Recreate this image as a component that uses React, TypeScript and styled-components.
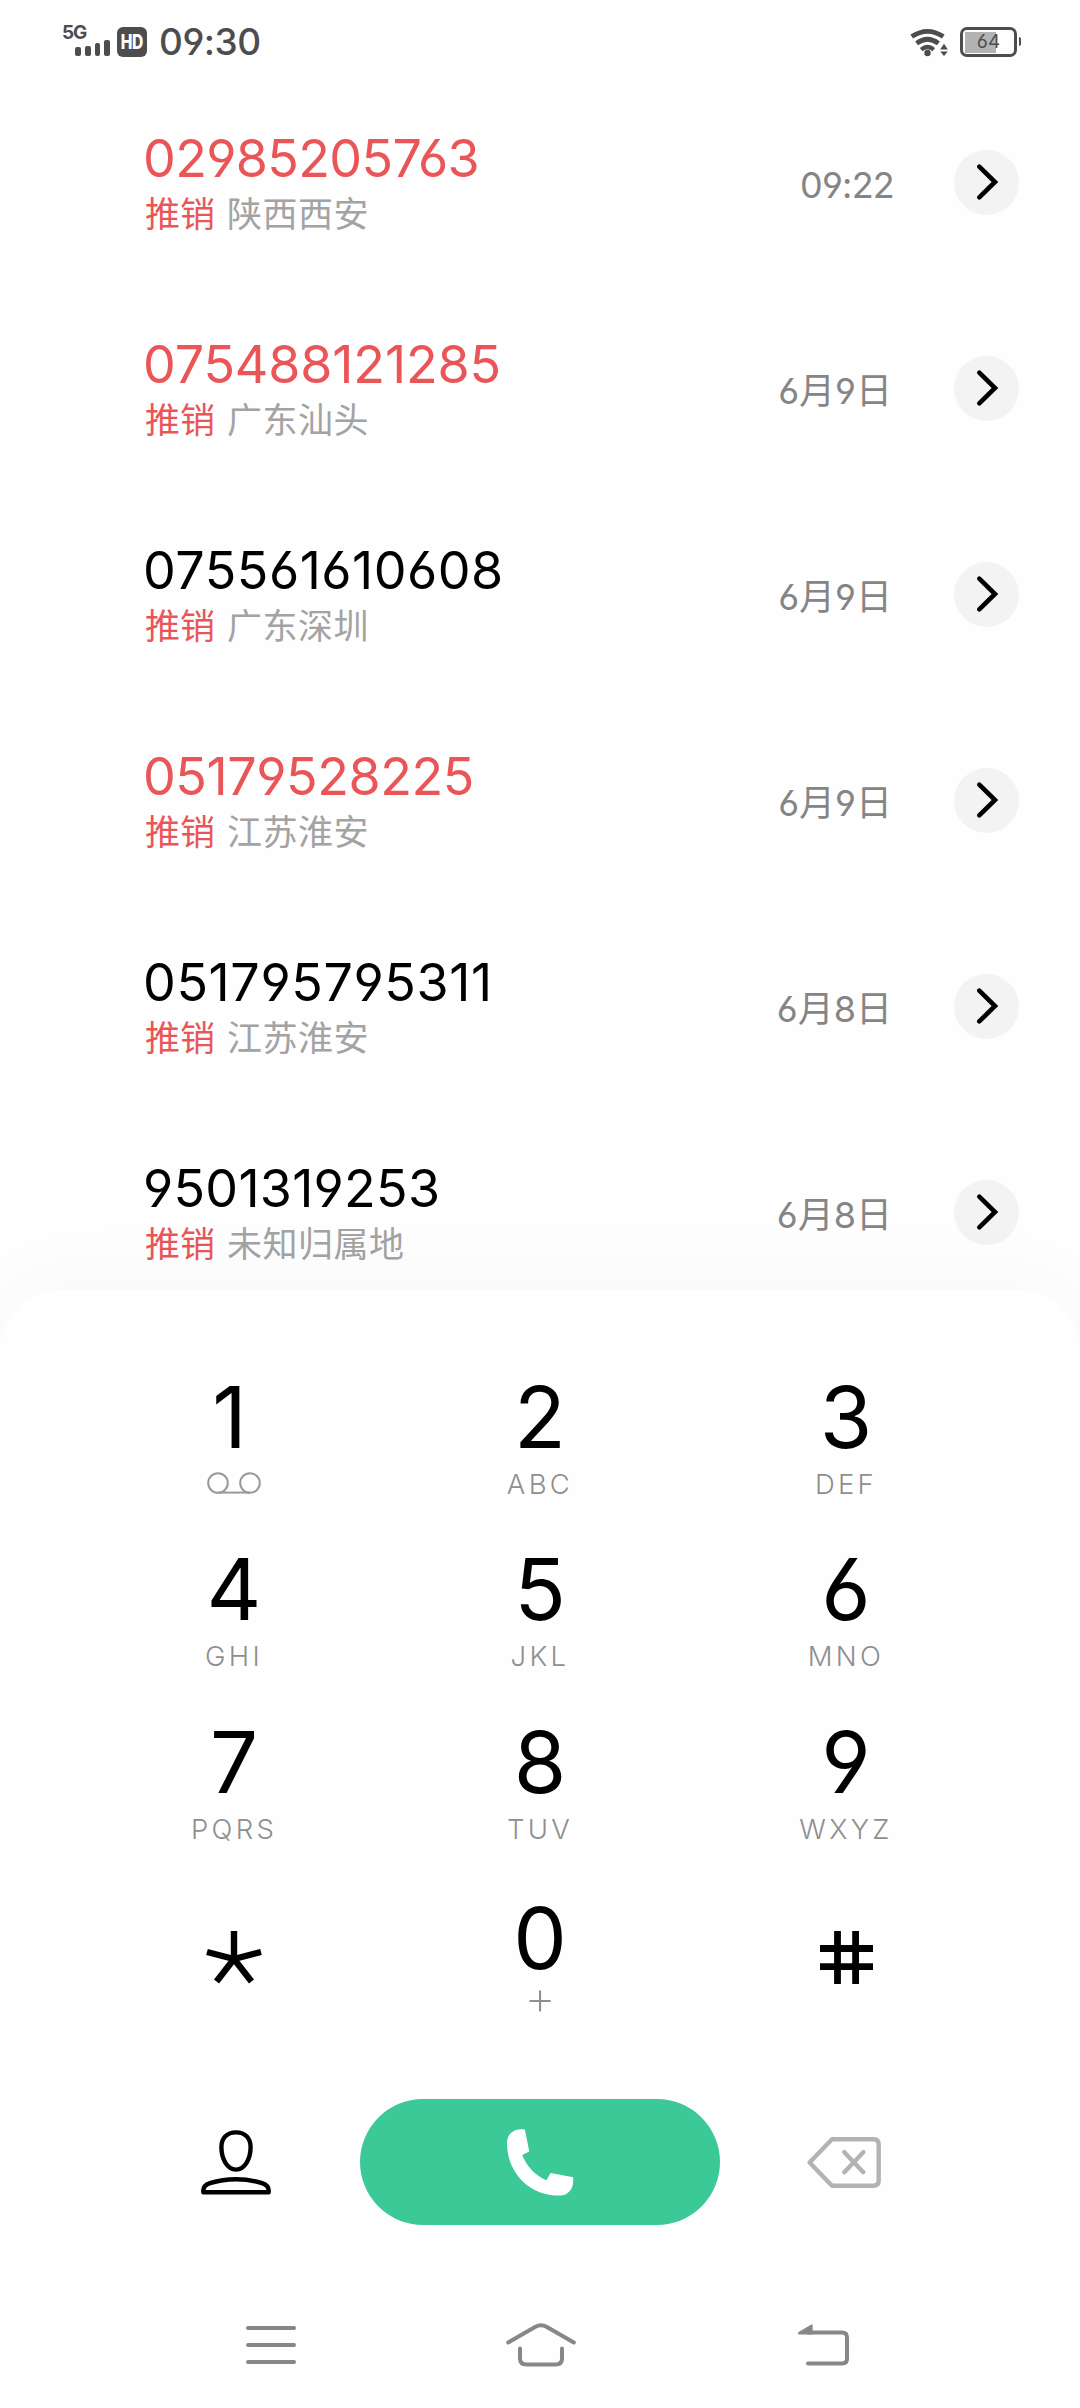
import React from 'react';
import styled, { createGlobalStyle } from 'styled-components';

const GlobalStyle = createGlobalStyle`
  * { box-sizing: border-box; }
  body {
    margin: 0;
    background: #fefefe;
    font-family: Inter, 'Noto Sans CJK SC', sans-serif;
    font-feature-settings: 'cv03', 'cv04';
  }
  button {
    border: 0;
    padding: 0;
    background: none;
    font: inherit;
    font-feature-settings: inherit;
    color: inherit;
  }
  svg { display: block; overflow: visible; }
`;

const Screen = styled.div`
  width: 1080px;
  height: 2408px;
  display: flex;
  flex-direction: column;
  overflow: hidden;
  background: #fefefe;
`;

/* ---------- Status bar ---------- */

const StatusBar = styled.header`
  flex: 0 0 79px;
  display: flex;
  justify-content: space-between;
  align-items: flex-start;
  padding: 24px 59px 0 62px;
  color: #4d4d4d;
`;

const StatusGroup = styled.div`
  display: flex;
  align-items: flex-start;
`;

const Signal = styled.div`
  width: 49px;
  display: flex;
  flex-direction: column;
`;

const NetworkType = styled.span`
  height: 16px;
  font-size: 19px;
  line-height: 17px;
  font-weight: 700;
  letter-spacing: -1.2px;
`;

const Bars = styled.div`
  display: flex;
  align-items: flex-end;
  gap: 4px;
  padding-left: 13px;
`;

const Bar = styled.i<{ $height: number }>`
  width: 5.8px;
  height: ${(p) => p.$height}px;
  border-radius: 2px;
  background: #4d4d4d;
`;

const HdBadge = styled.span`
  width: 30px;
  height: 30px;
  margin: 3px 12px 0 6px;
  display: flex;
  align-items: center;
  justify-content: center;
  border-radius: 6px;
  background: #4d4d4d;
  color: #fff;
`;

const HdText = styled.span`
  font-size: 19.5px;
  line-height: 30px;
  font-weight: 800;
  letter-spacing: -0.6px;
  transform: scaleX(0.8);
`;

const Clock = styled.time`
  font-size: 37px;
  line-height: 36px;
  font-weight: 450;
  letter-spacing: -0.5px;
`;

const WifiWrap = styled.div`
  margin: 5px 11px 0 0;
`;

const Battery = styled.div`
  width: 57px;
  height: 30px;
  margin-top: 3px;
  padding: 1.5px;
  border: 3px solid #4d4d4d;
  border-radius: 7px;
`;

const BatteryLevel = styled.div<{ $level: number }>`
  height: 100%;
  display: flex;
  align-items: center;
  justify-content: center;
  font-size: 19px;
  line-height: 20px;
  background: linear-gradient(90deg, #b3b3b3 ${(p) => p.$level}%, transparent 0);
`;

const BatteryNub = styled.i`
  width: 2.5px;
  height: 9px;
  margin: 13px 0 0 1.5px;
  border-radius: 0 2px 2px 0;
  background: #4d4d4d;
`;

/* ---------- Call log ---------- */

const CallLog = styled.ul`
  flex: 0 0 1211px;
  margin: 0;
  padding: 0;
  list-style: none;
  overflow: hidden;
`;

const CallRow = styled.li`
  height: 206px;
  display: flex;
  align-items: center;
  padding: 0 61px 0 143px;
`;

const Caller = styled.div`
  flex: 1;
  padding-bottom: 1px;
`;

const PhoneNumber = styled.div<{ $missed: boolean; $tracking: number }>`
  font-size: 52px;
  line-height: 52px;
  font-weight: 380;
  letter-spacing: ${(p) => p.$tracking}px;
  color: ${(p) => (p.$missed ? '#ea5558' : '#000')};
`;

const Origin = styled.div`
  display: flex;
  gap: 12px;
  margin: 9px 0 0 2px;
  font-family: 'Noto Sans CJK SC', sans-serif;
  font-size: 35px;
  line-height: 36px;
  color: #a3a3a3;
`;

const Place = styled.span`
  letter-spacing: 0.5px;
`;

const Tag = styled.span`
  color: #ea5558;
`;

const CallTime = styled.time<{ $tight: boolean }>`
  padding-top: 5px;
  margin-right: ${(p) => (p.$tight ? 60 : 62)}px;
  font-size: 36px;
  line-height: 36px;
  letter-spacing: ${(p) => (p.$tight ? '-0.8px' : 0)};
  color: #858585;
`;

const DetailButton = styled.button`
  width: 65px;
  height: 65px;
  padding-left: 2px;
  display: flex;
  align-items: center;
  justify-content: center;
  border-radius: 50%;
  background: #f3f3f3;
`;

/* ---------- Dial sheet ---------- */

const Sheet = styled.section`
  position: relative;
  flex: 1;
  display: flex;
  flex-direction: column;
  border-radius: 60px 60px 0 0;
  background: #fefefe;
  box-shadow: 0 0 95px rgba(0, 0, 0, 0.04);
`;

const Keypad = styled.div`
  display: grid;
  grid-template-columns: repeat(3, 306px);
  grid-template-rows: 172px 173px 176px 204px;
  padding: 84px 81px 0;
`;

const Key = styled.button`
  display: flex;
  flex-direction: column;
  align-items: center;
  justify-content: flex-start;
`;

const Digit = styled.span<{ $inset: number }>`
  padding-right: ${(p) => p.$inset}px;
  font-size: 85px;
  line-height: 87px;
  font-weight: 370;
  color: #000;
`;

const Letters = styled.span`
  margin-top: 10px;
  font-size: 27.5px;
  line-height: 27px;
  font-weight: 330;
  letter-spacing: 3.3px;
  color: #8f8f8f;
`;

const Plus = styled.span`
  margin-top: -3px;
  font-size: 49px;
  line-height: 38px;
  font-weight: 250;
  color: #8f8f8f;
`;

const VoicemailWrap = styled.span`
  margin-top: 11px;
`;

const SymbolWrap = styled.span`
  padding-top: 36px;
`;

const Actions = styled.div`
  height: 126px;
  display: flex;
  align-items: center;
  padding-left: 201px;
`;

const CallButton = styled.button`
  width: 360px;
  height: 126px;
  margin: 0 87px 0 89px;
  display: flex;
  align-items: center;
  justify-content: center;
  border-radius: 63px;
  background: #3bc998;
`;

const NavBar = styled.nav`
  flex: 1;
  display: flex;
  align-items: center;
  padding: 57px 0 0 246px;
  color: #878787;
`;

const NavButton = styled.button<{ $gap: number }>`
  margin-right: ${(p) => p.$gap}px;
`;

/* ---------- Icons ---------- */

const WifiIcon = () => (
  <svg width="39" height="28" viewBox="0 0 39 28" fill="none" stroke="#4d4d4d" strokeWidth="4.8">
    <path d="M1.7 7.6 Q17.5 -2.8 33.3 7.6" />
    <path d="M6.6 14.4 Q17.5 6.2 28.4 14.4" />
    <path d="M11.2 20.6 Q17.5 15.4 23.8 20.6" strokeWidth="4.2" />
    <circle cx="17.5" cy="24" r="3.2" fill="#4d4d4d" stroke="none" />
    <path d="M34 14.8 L37.8 20.5 H30.2 Z M34 27 L37.8 22.5 H30.2 Z" fill="#4d4d4d" stroke="none" />
  </svg>
);

const ChevronIcon = () => (
  <svg width="21" height="36" viewBox="0 0 21 36" fill="none" stroke="#000" strokeWidth="4.6" strokeLinecap="round">
    <path d="M2.3 2.6 L18 18 L2.3 33.4" />
  </svg>
);

const VoicemailIcon = () => (
  <svg width="54" height="22" viewBox="0 0 54 22" fill="none" stroke="#999" strokeWidth="2">
    <circle cx="11" cy="11" r="9.8" />
    <circle cx="43" cy="11" r="9.8" />
    <path d="M11 20.6 H43" />
  </svg>
);

const StarIcon = () => (
  <svg width="56" height="53" viewBox="0 0 56 53" fill="none" stroke="#000" strokeWidth="6.4">
    <path d="M28 0 V28 M1 21 L28 28 L55 21 M10.5 50.5 L28 28 L45.5 50.5" />
  </svg>
);

const HashIcon = () => (
  <svg width="53" height="53" viewBox="0 0 53 53" fill="none" stroke="#000" strokeWidth="6.8">
    <path d="M17.5 0 V53 M35.6 0 V53 M0 17.5 H53 M0 35.6 H53" />
  </svg>
);

const ContactIcon = () => (
  <svg width="70" height="65" viewBox="0 0 70 65" fill="none" stroke="#000" strokeWidth="4.4" strokeLinejoin="round">
    <path d="M35 2.4 C44.5 2.4 49.6 8.6 49.6 17 C49.6 28.5 44 39.6 35 39.6 C26 39.6 20.4 28.5 20.4 17 C20.4 8.6 25.5 2.4 35 2.4Z" />
    <path d="M2.3 62.2 V60.6 C2.3 56.8 5 54.4 9 53.1 C17 50.6 26 49.2 35 49.2 C44 49.2 53 50.6 61 53.1 C65 54.4 67.7 56.8 67.7 60.6 V62.2 Z" />
  </svg>
);

const HandsetIcon = () => (
  <svg width="66" height="67" viewBox="0 0 66 67" fill="#fff">
    <path d="M17.8 .5 L22.3 22.4 L15.2 25.9 C20 37.8 28 46 39.3 51.3 L43.7 43.9 L66.2 48.2 V52.2 C66.2 60 61 66.5 53 66.5 C22 67 0 43.2 0 14 C0 5.4 6 .2 14.5 .2 Q17 .2 17.8 .5 Z" />
  </svg>
);

const BackspaceIcon = () => (
  <svg width="74" height="51" viewBox="0 0 74 51" fill="none" stroke="#b3b3b3" strokeWidth="4.4" strokeLinejoin="round" strokeLinecap="round">
    <path d="M2.6 25.5 L25 2.3 H66.5 Q71.7 2.3 71.7 7.5 V43.5 Q71.7 48.7 66.5 48.7 H25 Z" />
    <path d="M37.3 15.2 L56.3 35.2 M56.3 15.2 L37.3 35.2" />
  </svg>
);

const RecentsIcon = () => (
  <svg width="50" height="38" viewBox="0 0 50 38" fill="none" stroke="currentColor" strokeWidth="4" strokeLinecap="round">
    <path d="M2 2 H48 M2 19 H48 M2 36 H48" />
  </svg>
);

const HomeIcon = () => (
  <svg width="70" height="44" viewBox="0 0 70 44" fill="none" stroke="currentColor" strokeWidth="4" strokeLinecap="round">
    <path d="M2.2 19.5 L29.5 3.8 Q35 .6 40.5 3.8 L67.8 19.5" />
    <path d="M14 25.5 V35.5 Q14 41.6 20.5 41.6 H49.5 Q56 41.6 56 35.5 V25.5" />
  </svg>
);

const BackIcon = () => (
  <svg width="51" height="42" viewBox="0 0 51 42" fill="none" stroke="currentColor" strokeWidth="4" strokeLinecap="round">
    <path d="M10 8.4 H44 Q49 8.4 49 13.4 V34.4 Q49 39.4 44 39.4 H10" />
    <path d="M0 9.4 Q0 8.4 1 7.7 L13.4 .4 Q14.6 0 14.6 1.2 V10.4 H1 Q0 10.4 0 9.4Z" fill="currentColor" stroke="none" />
  </svg>
);

/* ---------- Data ---------- */

interface Call {
  number: string;
  place: string;
  time: string;
  missed: boolean;
  tracking: number;
}

const calls: Call[] = [
  { number: '02985205763', place: '陕西西安', time: '09:22', missed: true, tracking: -0.65 },
  { number: '075488121285', place: '广东汕头', time: '6月9日', missed: true, tracking: -0.15 },
  { number: '075561610608', place: '广东深圳', time: '6月9日', missed: false, tracking: 0.5 },
  { number: '05179528225', place: '江苏淮安', time: '6月9日', missed: true, tracking: -0.45 },
  { number: '051795795311', place: '江苏淮安', time: '6月8日', missed: false, tracking: 0.6 },
  { number: '9501319253', place: '未知归属地', time: '6月8日', missed: false, tracking: 0.25 },
];

const letterKeys: [string, string][] = [
  ['1', ''],
  ['2', 'ABC'],
  ['3', 'DEF'],
  ['4', 'GHI'],
  ['5', 'JKL'],
  ['6', 'MNO'],
  ['7', 'PQRS'],
  ['8', 'TUV'],
  ['9', 'WXYZ'],
];

export default function App() {
  return (
    <>
      <GlobalStyle />
      <Screen>
        <StatusBar>
          <StatusGroup>
            <Signal>
              <NetworkType>5G</NetworkType>
              <Bars>
                {[9, 10, 13, 16].map((h) => (
                  <Bar key={h} $height={h} />
                ))}
              </Bars>
            </Signal>
            <HdBadge>
              <HdText>HD</HdText>
            </HdBadge>
            <Clock>09:30</Clock>
          </StatusGroup>
          <StatusGroup>
            <WifiWrap>
              <WifiIcon />
            </WifiWrap>
            <Battery>
              <BatteryLevel $level={64}>64</BatteryLevel>
            </Battery>
            <BatteryNub />
          </StatusGroup>
        </StatusBar>

        <CallLog>
          {calls.map((c) => (
            <CallRow key={c.number}>
              <Caller>
                <PhoneNumber $missed={c.missed} $tracking={c.tracking}>
                  {c.number}
                </PhoneNumber>
                <Origin>
                  <Tag>推销</Tag>
                  <Place>{c.place}</Place>
                </Origin>
              </Caller>
              <CallTime $tight={c.time.includes(':')}>{c.time}</CallTime>
              <DetailButton aria-label="详情">
                <ChevronIcon />
              </DetailButton>
            </CallRow>
          ))}
        </CallLog>

        <Sheet>
          <Keypad>
            {letterKeys.map(([digit, letters]) => (
              <Key key={digit}>
                <Digit $inset={digit === '1' ? 9 : 0}>{digit}</Digit>
                {letters ? (
                  <Letters>{letters}</Letters>
                ) : (
                  <VoicemailWrap>
                    <VoicemailIcon />
                  </VoicemailWrap>
                )}
              </Key>
            ))}
            <Key aria-label="*">
              <SymbolWrap>
                <StarIcon />
              </SymbolWrap>
            </Key>
            <Key>
              <Digit $inset={0}>0</Digit>
              <Plus>+</Plus>
            </Key>
            <Key aria-label="#">
              <SymbolWrap>
                <HashIcon />
              </SymbolWrap>
            </Key>
          </Keypad>

          <Actions>
            <button aria-label="联系人">
              <ContactIcon />
            </button>
            <CallButton aria-label="拨打">
              <HandsetIcon />
            </CallButton>
            <button aria-label="删除">
              <BackspaceIcon />
            </button>
          </Actions>

          <NavBar>
            <NavButton $gap={210} aria-label="最近任务">
              <RecentsIcon />
            </NavButton>
            <NavButton $gap={222} aria-label="主页">
              <HomeIcon />
            </NavButton>
            <NavButton $gap={0} aria-label="返回">
              <BackIcon />
            </NavButton>
          </NavBar>
        </Sheet>
      </Screen>
    </>
  );
}
